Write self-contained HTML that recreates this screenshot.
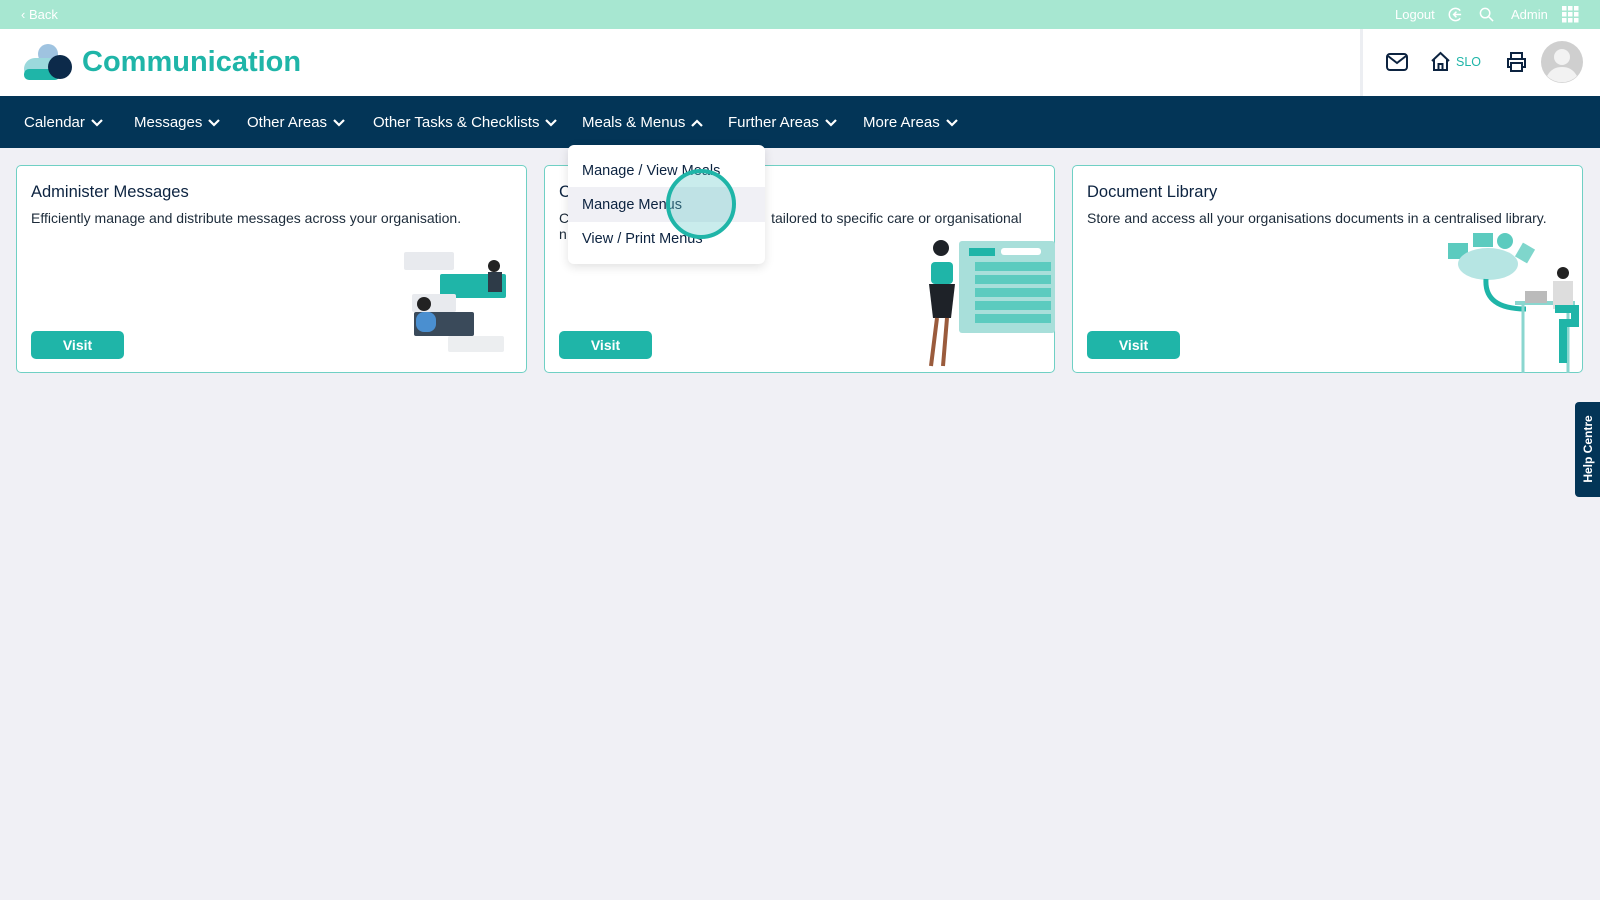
<!DOCTYPE html>
<html><head><meta charset="utf-8"><style>
*{box-sizing:border-box;margin:0;padding:0}
body{width:1600px;height:900px;background:#f0f0f5;font-family:"Liberation Sans",sans-serif;position:relative;overflow:hidden;color:#0c2340}
.top{position:absolute;left:0;top:0;width:1600px;height:29px;background:#a7e7d1;color:#fff;font-size:13px}
.top span{position:absolute;top:7px}
.hdr{position:absolute;top:29px;left:0;width:1600px;height:67px;background:#fff}
.nav{position:absolute;top:96px;left:0;width:1600px;height:52px;background:#033557;color:#fff;font-size:15px}
.nav span{position:absolute;top:18px;white-space:nowrap}
.nav svg{vertical-align:middle;margin-left:6px}
.card{position:absolute;top:165px;height:208px;background:#fff;border:1.5px solid #6fd0c4;border-radius:5px}
.card h3{position:absolute;left:14px;top:17px;font-size:16.5px;font-weight:normal;color:#0c2340}
.card p{position:absolute;left:14px;top:44px;font-size:14px;color:#1c2b3a;white-space:nowrap}
.btn{position:absolute;left:14px;top:165px;width:93px;height:28px;background:#1fb5a8;border-radius:5px;color:#fff;font-weight:bold;font-size:14px;text-align:center;line-height:28px}
.dd{position:absolute;left:568px;top:145px;width:197px;height:119px;background:#fff;border-radius:6px;box-shadow:0 3px 10px rgba(0,0,0,.12);font-size:14.5px}
.dd div{position:absolute;left:14px}
</style></head><body>
<div class="top">
<span style="left:21px">‹ Back</span>
<span style="left:1395px">Logout</span>
<svg style="position:absolute;left:1448px;top:7px" width="15" height="15" viewBox="0 0 16 16" fill="none" stroke="#fff" stroke-width="1.6"><path d="M13 4A6.5 6.5 0 1 0 13 12"/><path d="M14 8H6M9 5L6 8l3 3"/></svg>
<svg style="position:absolute;left:1479px;top:7px" width="15" height="15" viewBox="0 0 16 16" fill="none" stroke="#fff" stroke-width="1.6"><circle cx="6.5" cy="6.5" r="5"/><path d="M10.5 10.5L15 15"/></svg>
<span style="left:1511px">Admin</span>
<svg style="position:absolute;left:1562px;top:6px" width="17" height="17" viewBox="0 0 17 17" fill="#fff"><rect x="0" y="0" width="4.5" height="4.5"/><rect x="6" y="0" width="4.5" height="4.5"/><rect x="12" y="0" width="4.5" height="4.5"/><rect x="0" y="6" width="4.5" height="4.5"/><rect x="6" y="6" width="4.5" height="4.5"/><rect x="12" y="6" width="4.5" height="4.5"/><rect x="0" y="12" width="4.5" height="4.5"/><rect x="6" y="12" width="4.5" height="4.5"/><rect x="12" y="12" width="4.5" height="4.5"/></svg>
</div>
<div class="hdr">
<svg style="position:absolute;left:24px;top:15px" width="50" height="36" viewBox="0 0 50 36"><circle cx="24" cy="10" r="10" fill="#9fc3e0"/><rect x="0" y="14" width="36" height="22" rx="11" fill="#9bd9dc"/><rect x="0" y="25" width="36" height="11" rx="5" fill="#1fb5a8"/><circle cx="36" cy="23" r="12" fill="#0c2a4a"/></svg>
<div style="position:absolute;left:82px;top:17px;font-size:29px;font-weight:bold;color:#1fb5a8">Communication</div>
<div style="position:absolute;left:1360px;top:0;width:3px;height:67px;background:#eceef2"></div>
<svg style="position:absolute;left:1386px;top:23px" width="22" height="20" viewBox="0 0 22 20" fill="none" stroke="#0c2340" stroke-width="2"><rect x="1" y="2" width="20" height="16" rx="3"/><path d="M2 4l9 7 9-7"/></svg>
<svg style="position:absolute;left:1430px;top:22px" width="21" height="21" viewBox="0 0 21 21" fill="none" stroke="#0c2340" stroke-width="2"><path d="M2 10L10.5 2 19 10M4 8v11h13V8M8.5 19v-6h4v6"/></svg>
<div style="position:absolute;left:1456px;top:26px;font-size:12.5px;color:#1fb5a8">SLO</div>
<svg style="position:absolute;left:1506px;top:22px" width="21" height="22" viewBox="0 0 21 22" fill="none" stroke="#0c2340" stroke-width="2"><path d="M5 7V2h11v5M5 16H2V8h17v8h-3M5 12h11v8H5z"/></svg>
<svg style="position:absolute;left:1541px;top:12px" width="42" height="42" viewBox="0 0 42 42"><circle cx="21" cy="21" r="21" fill="#cfcfcf"/><circle cx="21" cy="16" r="8" fill="#f2f2f2"/><path d="M6 35c4-7 9-9 15-9s11 2 15 9a21 21 0 0 1-30 0z" fill="#f2f2f2"/></svg>
</div>
<div class="nav">
<span style="left:24px">Calendar<svg width="12" height="8" viewBox="0 0 12 8" fill="none" stroke="#fff" stroke-width="2.2"><path d="M1 1l5 5 5-5"/></svg></span>
<span style="left:134px">Messages<svg width="12" height="8" viewBox="0 0 12 8" fill="none" stroke="#fff" stroke-width="2.2"><path d="M1 1l5 5 5-5"/></svg></span>
<span style="left:247px">Other Areas<svg width="12" height="8" viewBox="0 0 12 8" fill="none" stroke="#fff" stroke-width="2.2"><path d="M1 1l5 5 5-5"/></svg></span>
<span style="left:373px">Other Tasks &amp; Checklists<svg width="12" height="8" viewBox="0 0 12 8" fill="none" stroke="#fff" stroke-width="2.2"><path d="M1 1l5 5 5-5"/></svg></span>
<span style="left:582px">Meals &amp; Menus<svg width="12" height="8" viewBox="0 0 12 8" fill="none" stroke="#fff" stroke-width="2.2"><path d="M1 7l5-5 5 5"/></svg></span>
<span style="left:728px">Further Areas<svg width="12" height="8" viewBox="0 0 12 8" fill="none" stroke="#fff" stroke-width="2.2"><path d="M1 1l5 5 5-5"/></svg></span>
<span style="left:863px">More Areas<svg width="12" height="8" viewBox="0 0 12 8" fill="none" stroke="#fff" stroke-width="2.2"><path d="M1 1l5 5 5-5"/></svg></span>
</div>

<div class="card" style="left:16px;width:511px">
<h3>Administer Messages</h3>
<p>Efficiently manage and distribute messages across your organisation.</p>
<svg style="position:absolute;left:385px;top:78px" width="110" height="115" viewBox="0 0 110 115"><rect x="2" y="8" width="50" height="18" rx="2" fill="#e8eaee"/><rect x="38" y="30" width="66" height="24" rx="2" fill="#1fb5a8"/><rect x="10" y="50" width="44" height="18" rx="2" fill="#e8eaee"/><rect x="12" y="68" width="60" height="24" rx="2" fill="#3a4a5a"/><rect x="46" y="92" width="56" height="16" rx="2" fill="#eceef0"/><circle cx="92" cy="22" r="6" fill="#222"/><rect x="86" y="28" width="14" height="20" fill="#2e3b48"/><circle cx="22" cy="60" r="7" fill="#222"/><rect x="14" y="68" width="20" height="20" rx="8" fill="#4a8fd0"/></svg>
<div class="btn">Visit</div>
</div>

<div class="card" style="left:544px;width:511px">
<h3>C</h3>
<p>C<span style="margin-left:202px">tailored to specific care or organisational</span><br>n</p>
<svg style="position:absolute;left:368px;top:70px" width="142" height="135" viewBox="0 0 142 135"><rect x="46" y="5" width="96" height="92" rx="3" fill="#a8dfda"/><rect x="56" y="12" width="26" height="8" fill="#1fb5a8"/><rect x="88" y="12" width="40" height="7" rx="3" fill="#fff"/><g fill="#5ccbbf"><rect x="62" y="26" width="76" height="9"/><rect x="62" y="39" width="76" height="9"/><rect x="62" y="52" width="76" height="9"/><rect x="62" y="65" width="76" height="9"/><rect x="62" y="78" width="76" height="9"/></g><circle cx="28" cy="12" r="8" fill="#1e2228"/><rect x="18" y="26" width="22" height="22" rx="4" fill="#1fb5a8"/><path d="M16 48h26l-4 34H20z" fill="#1e2228"/><path d="M24 82l-6 48M34 82l-4 48" stroke="#9a5b3c" stroke-width="4"/></svg>
<div class="btn">Visit</div>
</div>

<div class="card" style="left:1072px;width:511px">
<h3>Document Library</h3>
<p>Store and access all your organisations documents in a centralised library.</p>
<svg style="position:absolute;left:370px;top:65px" width="140" height="142" viewBox="0 0 140 142"><rect x="5" y="12" width="20" height="16" fill="#5ccbbf"/><rect x="30" y="2" width="20" height="14" fill="#5ccbbf"/><circle cx="62" cy="10" r="8" fill="#5ccbbf"/><rect x="75" y="14" width="14" height="16" fill="#7fd6cc" transform="rotate(30 82 22)"/><ellipse cx="45" cy="33" rx="30" ry="16" fill="#b6e5e3"/><path d="M43 48q-2 30 40 30" stroke="#1fb5a8" stroke-width="5" fill="none"/><rect x="72" y="70" width="60" height="4" fill="#8ad6cf"/><path d="M80 74v68M125 74v68" stroke="#8ad6cf" stroke-width="3"/><rect x="82" y="60" width="22" height="12" fill="#bbb"/><circle cx="120" cy="42" r="6" fill="#222"/><rect x="110" y="50" width="20" height="28" fill="#ddd"/><path d="M112 78h20v14h-12v40" stroke="#1fb5a8" stroke-width="8" fill="none"/></svg>
<div class="btn">Visit</div>
</div>

<div class="dd">
<div style="top:18px">Manage / View Meals</div>
<div style="left:0;top:42px;width:197px;height:35px;background:#f0f0f5"></div>
<div style="top:52px">Manage Menus</div>
<div style="top:86px">View / Print Menus</div>
</div>
<div style="position:absolute;left:666px;top:169px;width:70px;height:70px;border-radius:50%;border:4px solid #1fb5a8;background:rgba(100,200,200,.35)"></div>

<div style="position:absolute;left:1575px;top:402px;width:25px;height:95px;background:#033557;border-radius:4px 0 0 4px"><div style="position:absolute;left:13px;top:47px;transform:translate(-50%,-50%) rotate(-90deg);color:#fff;font-size:12px;font-weight:bold;white-space:nowrap">Help Centre</div></div>
</body></html>
